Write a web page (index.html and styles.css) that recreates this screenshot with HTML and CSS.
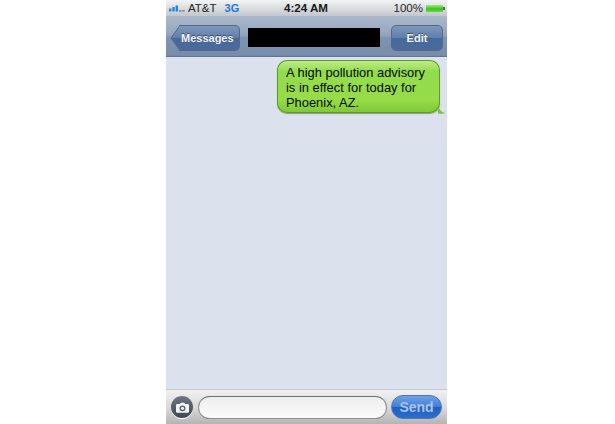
FILE: index.html
```html
<!DOCTYPE html>
<html lang="en">
<head>
<meta charset="utf-8">
<title>Messages</title>
<link rel="stylesheet" href="styles.css">
</head>
<body>
<div class="phone">
  <div class="status">
    <div class="status-left">
      <svg class="signal" width="17" height="8" viewBox="0 0 17 8"><rect x="0" y="4.5" width="2.4" height="3" fill="#2a86dc"/><rect x="3.3" y="3" width="2.4" height="4.5" fill="#2a86dc"/><rect x="6.6" y="1.5" width="2.4" height="6" fill="#2a86dc"/><rect x="9.9" y="6.3" width="2.4" height="1.2" fill="#5f6c7c"/><rect x="13.2" y="6.3" width="2.4" height="1.2" fill="#5f6c7c"/></svg>
      <span class="carrier">AT&amp;T</span>
      <span class="net">3G</span>
    </div>
    <div class="clock">4:24 AM</div>
    <div class="status-right">
      <span class="pct">100%</span>
      <svg class="battery" width="19" height="7" viewBox="0 0 19 7"><defs><linearGradient id="bat" x1="0" y1="0" x2="0" y2="1"><stop offset="0" stop-color="#a5ec72"/><stop offset="0.55" stop-color="#3cc420"/><stop offset="1" stop-color="#63d844"/></linearGradient></defs><rect x="0" y="0" width="17" height="7" fill="url(#bat)"/><rect x="17" y="2" width="2" height="3" fill="#5a6a55"/></svg>
    </div>
  </div>
  <div class="navbar">
    <div class="back"><svg class="back-tip" width="10" height="26" viewBox="0 0 10 26"><defs><linearGradient id="tip" x1="0" y1="0" x2="0" y2="1"><stop offset="0" stop-color="#7e98bc"/><stop offset="0.5" stop-color="#5f7fab"/><stop offset="0.51" stop-color="#47699a"/><stop offset="1" stop-color="#4a6b9b"/></linearGradient></defs><path d="M10 .5 L1 13 L10 25.5 Z" fill="url(#tip)"/><path d="M10 .5 L1 13 L10 25.5" fill="none" stroke="#54688a"/></svg><span class="back-label">Messages</span></div>
    <div class="redacted"></div>
    <div class="edit">Edit</div>
  </div>
  <div class="thread">
    <div class="bubble">
      A high pollution advisory<br>is in effect for today for<br>Phoenix, AZ.
      <svg class="tail" width="7" height="8" viewBox="0 0 7 8"><path d="M0 0 C1 3 3 6 7 7 C5 8 2 8 0 7.5 Z" fill="#7fc236"/></svg>
    </div>
  </div>
  <div class="composer">
    <div class="camera"><svg width="15" height="12" viewBox="0 0 15 12"><path fill-rule="evenodd" d="M1.5 2 H4.5 L5.5 .5 H9.5 L10.5 2 H13.5 Q15 2 15 3.5 V10.5 Q15 12 13.5 12 H1.5 Q0 12 0 10.5 V3.5 Q0 2 1.5 2 Z M7.5 3.6 A3.4 3.4 0 1 0 7.5 10.4 A3.4 3.4 0 1 0 7.5 3.6 Z" fill="#f2f3f5"/><circle cx="7.5" cy="7" r="1.8" fill="#f2f3f5"/></svg></div>
    <div class="input"></div>
    <div class="send">Send</div>
  </div>
</div>
</body>
</html>
```
FILE: styles.css
```css
* { box-sizing: border-box; }
html, body { margin: 0; padding: 0; background: #fff; }
body { width: 615px; height: 424px; overflow: hidden; font-family: "Liberation Sans", Arial, sans-serif; }
.phone { width: 281px; height: 424px; margin-left: 166px; display: flex; flex-direction: column; background: #dbe2ed; }
.status { height: 16px; display: flex; align-items: center; justify-content: space-between; padding: 0 2px 0 3px; background: linear-gradient(#f3f4f5, #c3c6cb); position: relative; font-size: 11px; color: #23262b; }
.status-left, .status-right { display: flex; align-items: center; }
.signal { margin-right: 2px; }
.carrier { font-size: 11.5px; }
.net { color: #1f78d6; font-weight: 700; font-size: 11px; margin-left: 8px; }
.clock { position: absolute; left: 118px; top: 1px; font-weight: 700; font-size: 11.6px; color: #17181b; line-height: 14px; }
.pct { font-size: 11.5px; margin-right: 3px; }
.navbar { height: 41px; display: flex; align-items: center; padding: 2px 4px 0 4px; background: linear-gradient(#adbacd 0%, #91a3bc 48%, #7f94b2 52%, #788dac 96%, #566a8a 100%); }
.back { display: flex; align-items: center; height: 26px; width: 70px; flex: none; }
.back-tip { flex: none; margin-right: -1px; }
.back-label { flex: 1; height: 26px; display: flex; align-items: center; justify-content: flex-start; padding-left: 2px; background: linear-gradient(#7e98bc 0%, #5f7fab 50%, #47699a 51%, #4a6b9b 100%); border: 1px solid #54688a; border-left: 0; border-radius: 0 5px 5px 0; color: #f2f4f7; font-size: 11px; font-weight: 700; text-shadow: 0 -1px 0 #3a4c68; }
.redacted { width: 132px; height: 19px; margin-left: 8px; background: #000; flex: none; }
.edit { width: 52px; height: 26px; margin-left: auto; display: flex; align-items: center; justify-content: center; background: linear-gradient(#7e98bc 0%, #5f7fab 50%, #47699a 51%, #4a6b9b 100%); border: 1px solid #54688a; border-radius: 5px; color: #f2f4f7; font-size: 11px; font-weight: 700; text-shadow: 0 -1px 0 #3a4c68; }
.thread { flex: 1; display: flex; align-items: flex-start; justify-content: flex-end; padding: 3px 7px 0 0; }
.bubble { position: relative; width: 163px; height: 53px; padding: 5px 4px 0 9px; border-radius: 10px; background: linear-gradient(#c3ec8f 0%, #92dc4c 22%, #97dc48 75%, #7fc737 100%); box-shadow: inset 0 0 0 1px #5f9c25, 0 1px 1px #8a9a80; color: #050803; font-size: 12.9px; line-height: 15px; white-space: nowrap; }
.tail { position: absolute; right: -5px; bottom: -1px; }
.composer { height: 35px; display: flex; align-items: center; padding: 0 5px 0 5px; background: linear-gradient(#f1f1f1 0%, #d8d8d8 55%, #b4b4b4 100%); border-top: 1px solid #c4c8cd; }
.camera { width: 22px; height: 22px; border-radius: 50%; flex: none; display: flex; align-items: center; justify-content: center; background: linear-gradient(#6e7684, #3e4656); box-shadow: 0 1px 0 #fff; }
.camera svg { width: 13px; height: 11px; }
.input { width: 189px; height: 23px; margin-left: 5px; border-radius: 12px; flex: none; background: linear-gradient(#eeeeee, #fbfbfb); border: 1.5px solid #8f8f8f; border-top-color: #707070; }
.send { width: 51px; height: 24px; margin-left: auto; border-radius: 12px; display: flex; align-items: center; justify-content: center; background: linear-gradient(#6fa2e2 0%, #3f7ed6 50%, #1f60c2 51%, #2b6dcc 100%); border: 1px solid #4a78b8; color: #a9c4ea; font-size: 14px; font-weight: 700; }
```
